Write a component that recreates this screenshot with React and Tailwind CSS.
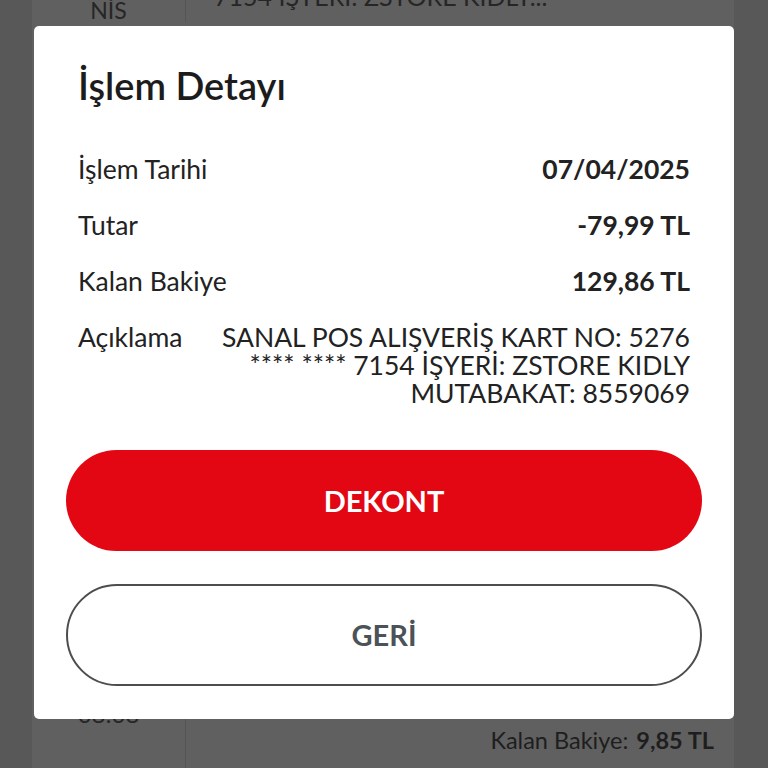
import React from "react";

const rows = [
  { label: "İşlem Tarihi", value: "07/04/2025" },
  { label: "Tutar", value: "-79,99 TL" },
  { label: "Kalan Bakiye", value: "129,86 TL" },
];

function Background() {
  return (
    <div className="h-[768px] bg-[#585858] px-[32px]">
      <div className="h-full bg-[#606060] mr-[2px] flex flex-col">
        <div className="flex h-[30px] -mt-[8px]">
          <div className="w-[154px] border-r border-[#555] flex justify-center">
            <span className="text-[23px] leading-[28px] text-[#262626] pt-[4px]">NİS</span>
          </div>
          <div className="flex-1 pl-[28px] text-[25px] leading-[20px] text-[#262626] -mt-[6px]">
            7154 İŞYERİ: ZSTORE KIDLY...
          </div>
        </div>
        <div className="flex-1" />
        <div className="flex h-[70px]">
          <div className="w-[154px] border-r border-[#555] flex justify-center">
            <span className="text-[24px] leading-[24px] text-[#262626] mt-[4px]">08:08</span>
          </div>
          <div className="flex-1 flex justify-end items-start pr-[20px] pt-[28px] text-[23.5px] leading-[28px] text-[#1e1e1e]">
            <span>Kalan Bakiye:</span>
            <span className="font-bold ml-[8px]">9,85 TL</span>
          </div>
        </div>
      </div>
    </div>
  );
}

export default function App() {
  return (
    <div className="relative h-[768px] overflow-hidden font-['Lato',sans-serif]">
      <Background />
      <div className="absolute inset-0 flex justify-center pt-[26px]">
        <div className="w-[700px] h-[693px] bg-white rounded-[5px] flex flex-col">
          <div className="px-[44px] pt-[37px]">
            <h1 className="text-[38px] leading-[44px] font-semibold text-[#1c1c1c]">İşlem Detayı</h1>
            <div className="mt-[48px] flex flex-col gap-[28px]">
              {rows.map((r) => (
                <div key={r.label} className="flex justify-between text-[26.5px] leading-[28px] text-[#222]">
                  <span>{r.label}</span>
                  <span className="font-bold">{r.value}</span>
                </div>
              ))}
              <div className="flex justify-between text-[26.5px] leading-[28px] text-[#222]">
                <span>Açıklama</span>
                <div className="text-right">
                  <div>SANAL POS ALIŞVERİŞ KART NO: 5276</div>
                  <div>**** **** 7154 İŞYERİ: ZSTORE KIDLY</div>
                  <div>MUTABAKAT: 8559069</div>
                </div>
              </div>
            </div>
          </div>
          <div className="px-[32px] mt-[43px] flex flex-col gap-[33px]">
            <button className="h-[101px] rounded-full bg-[#e30613] text-white text-[29px] font-bold">
              DEKONT
            </button>
            <button className="h-[102px] rounded-full border-2 border-[#4d4d4d] text-[#4b5258] text-[29px] font-bold">
              GERİ
            </button>
          </div>
        </div>
      </div>
    </div>
  );
}
